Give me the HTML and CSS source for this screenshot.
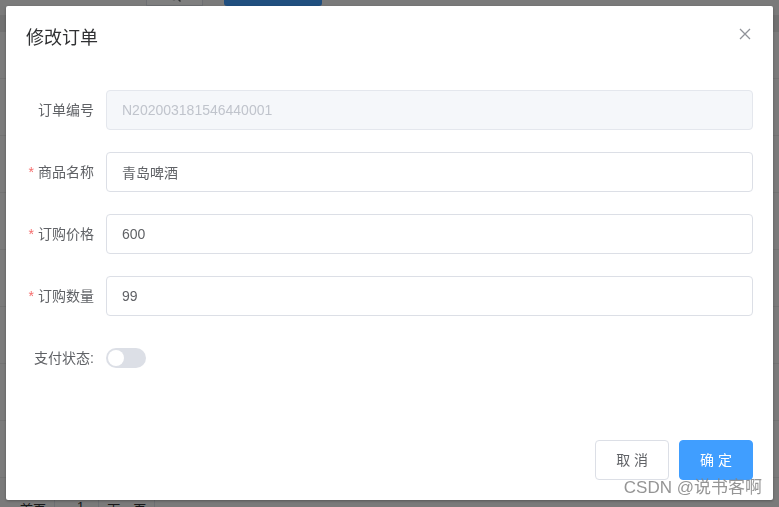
FILE: index.html
```html
<!DOCTYPE html>
<html lang="zh-CN">
<head>
    <meta charset="UTF-8">
    <meta name="viewport" content="width=device-width, initial-scale=1.0">
    <title>修改订单</title>
    <link rel="stylesheet" href="styles.css">
</head>
<body>

<div class="page">
    <div class="toolbar">
        <div class="search-input"></div>
        <button class="search-btn">
            <svg width="14" height="14" viewBox="0 0 14 14"><circle cx="6" cy="6" r="4.5" fill="none" stroke="#606266" stroke-width="1.4"/><path d="M9.3 9.3 L12.5 12.5" stroke="#606266" stroke-width="1.4"/></svg>
        </button>
        <button class="add-btn">新建订单</button>
    </div>
    <div class="table">
        <div class="table-head"></div>
        <div class="table-row first"></div>
        <div class="table-row"></div>
        <div class="table-row"></div>
        <div class="table-row"></div>
        <div class="table-row"></div>
        <div class="table-row"></div>
        <div class="table-row"></div>
        <div class="table-row"></div>
    </div>
    <div class="pager">
        <span class="pager-item">首页</span>
        <span class="pager-item num">1</span>
        <span class="pager-item">下一页</span>
    </div>
</div>

<div class="mask"></div>

<div class="dialog-wrapper">
    <div class="dialog">
        <div class="dialog-header">
            <span class="dialog-title">修改订单</span>
            <button class="dialog-close" type="button">
                <svg width="16" height="16" viewBox="0 0 16 16"><path d="M3 3 L13 13 M13 3 L3 13" stroke="#909399" stroke-width="1.3"/></svg>
            </button>
        </div>
        <div class="dialog-body">
            <form class="form">
                <div class="form-item">
                    <label class="form-label">订单编号</label>
                    <div class="form-content">
                        <input class="input" type="text" value="N202003181546440001" disabled>
                    </div>
                </div>
                <div class="form-item">
                    <label class="form-label"><span class="required">*</span>商品名称</label>
                    <div class="form-content">
                        <input class="input" type="text" value="青岛啤酒">
                    </div>
                </div>
                <div class="form-item">
                    <label class="form-label"><span class="required">*</span>订购价格</label>
                    <div class="form-content">
                        <input class="input" type="text" value="600">
                    </div>
                </div>
                <div class="form-item">
                    <label class="form-label"><span class="required">*</span>订购数量</label>
                    <div class="form-content">
                        <input class="input" type="text" value="99">
                    </div>
                </div>
                <div class="form-item">
                    <label class="form-label">支付状态:</label>
                    <div class="form-content">
                        <span class="switch"><span class="switch-dot"></span></span>
                    </div>
                </div>
            </form>
        </div>
        <div class="dialog-footer">
            <button class="btn" type="button">取 消</button>
            <button class="btn btn-primary" type="button">确 定</button>
        </div>
    </div>
</div>

<div class="watermark">CSDN @说书客啊</div>

</body>
</html>
```

FILE: styles.css
```css
html, body {
    margin: 0;
    height: 100%;
    overflow: hidden;
}
body {
    font-family: "Liberation Sans", "Noto Sans CJK SC", sans-serif;
    background-color: #f4f4f4;
}
.page {
    padding: 0;
}
.toolbar {
    height: 6px;
    overflow: hidden;
    display: flex;
    align-items: flex-end;
}
.search-input {
    width: 146px;
    height: 32px;
    background-color: #f6f6f6;
    border-right: 1px solid #dcdfe6;
}
.search-btn {
    width: 56px;
    height: 32px;
    background-color: #fff;
    border: 1px solid #dcdfe6;
    border-left: none;
    display: flex;
    align-items: flex-end;
    justify-content: center;
    padding: 0 0 2px;
}
.add-btn {
    width: 98px;
    height: 32px;
    margin-left: 21px;
    background-color: #409eff;
    border: none;
    border-radius: 3px;
    color: #fff;
    font-size: 14px;
    font-family: inherit;
}
.table {
    margin-top: 9px;
}
.table-head {
    height: 17px;
    background-color: #e2e2e2;
}
.table-row {
    height: 56px;
    background-color: #f7f7f7;
    border-bottom: 1px solid #e6e6e6;
}
.table-row.first {
    height: 46px;
}
.pager {
    margin-top: 21px;
    display: flex;
    padding-left: 20px;
    font-size: 13px;
    color: #303133;
}
.pager-item {
    padding-right: 8px;
    border-right: 1px solid #dcdfe6;
    margin-right: 8px;
}
.pager-item.num {
    padding: 0 14px;
}
.mask {
    position: fixed;
    top: 0;
    left: 0;
    right: 0;
    bottom: 0;
    background-color: rgba(0, 0, 0, 0.5);
}
.dialog-wrapper {
    position: fixed;
    top: 0;
    left: 0;
    right: 0;
    bottom: 0;
}
.dialog {
    width: 767px;
    margin: 6px auto 0;
    background-color: #fff;
    border-radius: 2px;
    box-shadow: 0 1px 3px rgba(0, 0, 0, 0.3);
}
.dialog-header {
    padding: 20px 20px 10px;
    display: flex;
    justify-content: space-between;
    align-items: flex-start;
}
.dialog-title {
    font-size: 18px;
    line-height: 24px;
    color: #303133;
}
.dialog-close {
    width: 16px;
    height: 16px;
    padding: 0;
    border: none;
    background: none;
    display: flex;
}
.dialog-body {
    padding: 30px 20px;
}
.form-item {
    display: flex;
    margin-bottom: 22px;
}
.form-label {
    width: 80px;
    box-sizing: border-box;
    padding-right: 12px;
    text-align: right;
    font-size: 14px;
    line-height: 40px;
    color: #606266;
}
.required {
    color: #f56c6c;
    margin-right: 4px;
}
.form-content {
    flex: 1;
    display: flex;
    align-items: center;
    min-height: 40px;
}
.input {
    width: 100%;
    height: 40px;
    box-sizing: border-box;
    padding: 0 15px;
    border: 1px solid #dcdfe6;
    border-radius: 4px;
    font-family: inherit;
    font-size: 14px;
    color: #606266;
    background-color: #fff;
    outline: none;
}
.input:disabled {
    background-color: #f5f7fa;
    border-color: #e4e7ed;
    color: #c0c4cc;
}
.switch {
    display: inline-flex;
    width: 40px;
    height: 20px;
    box-sizing: border-box;
    padding: 2px;
    border-radius: 10px;
    background-color: #dcdfe6;
}
.switch-dot {
    width: 16px;
    height: 16px;
    border-radius: 50%;
    background-color: #fff;
}
.dialog-footer {
    padding: 10px 20px 20px;
    display: flex;
    justify-content: flex-end;
}
.btn {
    padding: 12px 20px;
    font-family: inherit;
    font-size: 14px;
    line-height: 14px;
    border: 1px solid #dcdfe6;
    border-radius: 4px;
    background-color: #fff;
    color: #606266;
    cursor: pointer;
}
.btn-primary {
    margin-left: 10px;
    background-color: #409eff;
    border-color: #409eff;
    color: #fff;
}
.watermark {
    position: fixed;
    right: 17px;
    bottom: 9px;
    font-size: 17px;
    color: rgba(130, 130, 130, 0.85);
}
```
